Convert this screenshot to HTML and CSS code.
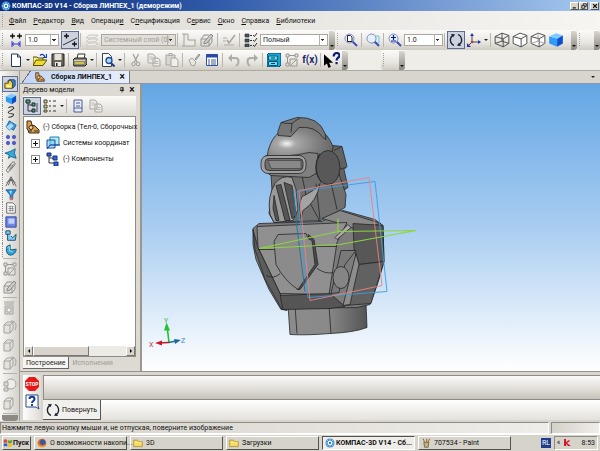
FILE: index.html
```html
<!DOCTYPE html>
<html lang="ru">
<head>
    <meta charset="UTF-8">
    <meta name="viewport" content="width=device-width, initial-scale=1.0">
    <title>КОМПАС-3D V14 - Сборка ЛИНПЕХ_1 (деморежим)</title>
    <link rel="stylesheet" href="styles.css">
</head>
<body>

    <!-- shared icons -->
    <svg class="sprite" aria-hidden="true">
        <symbol id="logo" viewBox="0 0 14 14"><circle cx="7" cy="7" r="6.3" fill="#3f8fd0"/><path d="M7 1v12M1 7h12M3 3l8 8M11 3l-8 8" stroke="#c8e8fa" fill="none"/><circle cx="7" cy="7" r="3" fill="#fff"/><circle cx="7" cy="7" r="1.6" fill="#2a78b8"/></symbol>
        <symbol id="step" viewBox="0 0 14 14"><path d="M1 3h5M3.500 .5v5M8 3h5M10.500 .5v5" stroke="#111" stroke-width="1.300"/><path d="M3 8v6M11 8v6M3 11h8M5 9.500L3 11l2 1.500M9 9.500l2 1.500-2 1.500" stroke="#3038d0" fill="none"/></symbol>
        <symbol id="snap" viewBox="0 0 14 14"><path d="M0 12L14 5" stroke="#333"/><path d="M1 3h5M3.500 .5v5M9 11h5M11.500 8.500v5" stroke="#111" stroke-width="1.300"/></symbol>
        <symbol id="layers" viewBox="0 0 14 14"><path d="M4 2h9l-3 3H1zM4 6h9l-3 3H1zM4 10h9l-3 3H1z" fill="#eeece8" stroke="#cbc8c2"/></symbol>
        <symbol id="sketch" viewBox="0 0 14 14"><path d="M2 1h4v6h7v6H2zM2 1H0M2 13H0M13 7h1" fill="#eceae6" stroke="#a5a29c"/></symbol>
        <symbol id="editpart" viewBox="0 0 14 14"><path d="M1 6h8v7H1zM1 6l3-4h5M9 13l3-4V5" fill="#e2e0dc" stroke="#97948e"/><path d="M4 9l7-8 2 2-6 7-3 1z" fill="#ccc" stroke="#888"/></symbol>
        <symbol id="check" viewBox="0 0 14 14"><path d="M1 5h4M1 8h3M2 12h10" stroke="#b0ada8"/><path d="M5 7l2 3 6-8" stroke="#a5a29c" stroke-width="1.500" fill="none"/></symbol>
        <symbol id="checklist" viewBox="0 0 14 14"><path d="M1 1h4v3H1zM1 6h4v3H1zM1 11h4v3H1z" fill="#456" stroke="#222" stroke-width=".6"/><path d="M6 2.500h2M6 7.500h2M6 12.500h2M9 2l1.500 1.500L13 0M9 7l1.500 1.500L13 5M9 12l1.500 1.500L13 10" stroke="#333" fill="none"/></symbol>
        <symbol id="lens" viewBox="0 0 14 14"><path d="M8.500 8.500l4.500 4.500" stroke="#3a50b4" stroke-width="2"/><circle cx="5.500" cy="5.500" r="4.500" fill="#e6f1fb" stroke="#7d90c8"/></symbol>
        <symbol id="zoompage" viewBox="0 0 14 14"><use href="#lens"/><path d="M3.500 2.500h3l1.500 1.500v4.500H3.500z" fill="#fff" stroke="#223"/></symbol>
        <symbol id="zoomwin" viewBox="0 0 14 14"><path d="M5 3h8v7H5z" fill="#d4f0f4" stroke="#8ac4cc"/><use href="#lens"/></symbol>
        <symbol id="zoompm" viewBox="0 0 14 14"><use href="#lens"/><path d="M3 4.500h5M5.500 2v5M3 8h5" stroke="#0c1c80" stroke-width="1.200"/></symbol>
        <symbol id="rotate" viewBox="0 0 14 14"><path d="M5 12.500A6 6 0 0 1 3.500 2.400M9 1.500a6 6 0 0 1 1.500 10.100" fill="none" stroke="#1c2430" stroke-width="1.300"/><path d="M2 1l4 .2-2 3.300zM12 13l-4-.2 2-3.300z" fill="#1c2430"/></symbol>
        <symbol id="axes" viewBox="0 0 14 14"><path d="M5 1v8h8M5 9l-4 4" fill="none" stroke="#444"/><path d="M3 3l2-3 2 3zM11 7l3 2-3 2zM0 10v4h4z" fill="#2838a8"/><circle cx="5" cy="9" r="1.300" fill="#c33"/></symbol>
        <symbol id="cubewire" viewBox="0 0 14 14"><path d="M1 4l6-3 6 2v7l-5 3-7-3zM1 4l7 2 5-3M8 6v7M7 1v7l-6 2M7 8l6 2" fill="none" stroke="#444" stroke-width=".8"/></symbol>
        <symbol id="cube" viewBox="0 0 14 14"><path d="M1 4l6-3 6 2v7l-5 3-7-3zM1 4l7 2 5-3M8 6v7" fill="#fff" stroke="#444" stroke-width=".8"/></symbol>
        <symbol id="cubehid" viewBox="0 0 14 14"><use href="#cube"/><path d="M7 1v7l-6 2M7 8l6 2" fill="none" stroke="#999" stroke-width=".8"/></symbol>
        <symbol id="cubeblue" viewBox="0 0 14 14"><path d="M1 4l6-3 6 2-5 3z" fill="#7cccfc"/><path d="M1 4l7 2v7l-7-3z" fill="#2f9bf4"/><path d="M8 6l5-3v7l-5 3z" fill="#0c4fd0"/></symbol>
        <symbol id="new" viewBox="0 0 14 14"><path d="M2.500 1h6l3 3v9.500h-9z" fill="#fff" stroke="#223a5c"/><path d="M8.500 1v3h3" fill="none" stroke="#223a5c"/></symbol>
        <symbol id="open" viewBox="0 0 14 14"><path d="M0 12V4h4l1 1h5v2" fill="#ffef7c" stroke="#55500c"/><path d="M0 12.500l3-5.500h11l-4 5.500z" fill="#eddb28" stroke="#55500c"/><path d="M7 2.500c2-2 4-1 5 1.500M13.500 1v3.500H10" fill="none" stroke="#1c3cc0" stroke-width="1.200"/></symbol>
        <symbol id="save" viewBox="0 0 14 14"><path d="M1 1h12v12H1z" fill="#6b6658" stroke="#222"/><path d="M3.500 1h7v6h-7z" fill="#e6e3d8"/><path d="M4 9h6v4H4z" fill="#e9e9e9"/><path d="M5 10h1.500v3H5z" fill="#222"/></symbol>
        <symbol id="print" viewBox="0 0 14 14"><path d="M4 6l1-5h7l-1 5" fill="#fff" stroke="#333"/><path d="M0 7l2-2h11l1 2v4l-2 2H1l-1-2z" fill="#8a8674" stroke="#222"/><path d="M2 10h9" stroke="#e9e03a" stroke-width="1.400"/><path d="M1 7.500h11" stroke="#d5d2c4"/></symbol>
        <symbol id="preview" viewBox="0 0 14 14"><path d="M1.500 .5h6l3 3v10h-9z" fill="#fff" stroke="#345"/><circle cx="8" cy="7.500" r="3" fill="#a9d6f2" stroke="#1c4d96" stroke-width="1.300"/><path d="M10 10l3.500 3.500" stroke="#1c3d86" stroke-width="2"/></symbol>
        <symbol id="cut" viewBox="0 0 14 14"><path d="M4 1l4 8M9.500 1L5.500 9" stroke="#a09d98" stroke-width="1.200"/><circle cx="4.500" cy="11" r="1.800" fill="none" stroke="#a09d98"/><circle cx="9" cy="11" r="1.800" fill="none" stroke="#a09d98"/></symbol>
        <symbol id="copy" viewBox="0 0 14 14"><path d="M1 1h5l2 2v7H1zM6 5h5l2 2v6H6z" fill="#edebe8" stroke="#aaa7a1"/><path d="M2.500 4h3M2.500 6h3M7.500 8.500h4M7.500 10.500h4" stroke="#bbb"/></symbol>
        <symbol id="paste" viewBox="0 0 14 14"><path d="M1 2h9v10H1z" fill="#d9d7d2" stroke="#aaa7a1"/><path d="M4 .5h3v2H4zM6 5h5l2 2v6.500H6z" fill="#f1efec" stroke="#aaa7a1"/></symbol>
        <symbol id="brush" viewBox="0 0 14 14"><path d="M8 6l4-5 1 1-4 5z" fill="#bbb" stroke="#999"/><path d="M2 7l3-2 4 4-2 4-3-1z" fill="#e9e7e3" stroke="#a5a29c"/></symbol>
        <symbol id="table" viewBox="0 0 14 14"><path d="M1.500 1.500h11v11h-11z" fill="#fff" stroke="#2d50a4"/><path d="M1.500 3h11" stroke="#2648a8" stroke-width="3"/><path d="M3 7h2M3 9h2M3 11h2M6 7h5M6 9h5M6 11h5" stroke="#445a90"/></symbol>
        <symbol id="undo" viewBox="0 0 14 14"><path d="M2 5h6c5 0 4 6 1 8" fill="none" stroke="#b0ada8" stroke-width="2"/><path d="M5 1L1 5l4 4z" fill="#b0ada8"/></symbol>
        <symbol id="redo" viewBox="0 0 14 14"><path d="M12 5H6c-5 0-4 6-1 8" fill="none" stroke="#b0ada8" stroke-width="2"/><path d="M9 1l4 4-4 4z" fill="#b0ada8"/></symbol>
        <symbol id="cabinet" viewBox="0 0 14 14"><path d="M0 2l2-2h12v12l-2 2H0z" fill="#18a8d8" stroke="#063a68"/><path d="M1.500 3h9v4h-9zM1.500 8.500h9v4h-9z" fill="#5fe0f8" stroke="#085878"/><path d="M4 5h4M4 10.500h4" stroke="#063a58"/></symbol>
        <symbol id="graypart" viewBox="0 0 14 14"><path d="M1 1h3v3H1zM10 1h3v3h-3zM4 2.500h6M2.500 4v6M1 10h3v3H1zM5 6h7v7H5z" fill="#e5e3df" stroke="#9a9792"/><path d="M6 12l5-5" stroke="#9a9792"/></symbol>
        <symbol id="whatsthis" viewBox="0 0 14 14"><path d="M0 2v10l2.500-2L4 14l2-1-1.500-3.500H8z" fill="#000"/><path d="M8.500 4c0-4 5-4 5-1 0 2-2.500 2-2.500 4.500M11 8.800v2" fill="none" stroke="#101c78" stroke-width="1.900"/></symbol>
        <symbol id="assembly" viewBox="0 0 14 14"><path d="M1 1h4l1 4 3 1 4 4v3H3l-1-3-1-1z" fill="#d9a058" stroke="#3c2810"/><circle cx="5" cy="7.500" r="2" fill="#f2d49c" stroke="#3c2810"/><path d="M8 11h4M3 11h3" stroke="#3c2810"/></symbol>
        <symbol id="part" viewBox="0 0 14 14"><path d="M4 4l2-2h6l1 1v6l-3 3" fill="#2c82d8" stroke="#1c3c6c"/><path d="M1 6h4V3h3l2 3v6H1z" fill="#f6d040" stroke="#4a3c10"/><path d="M3 8h5v3H3z" fill="#fff0a0"/></symbol>
        <symbol id="curve" viewBox="0 0 14 14"><path d="M4 2c3-2 7-1 6 1S3 6 4 8s6 0 6 2-3 3-6 3" fill="none" stroke="#333" stroke-width="1.200"/></symbol>
        <symbol id="plane" viewBox="0 0 14 14"><path d="M5 1l8 5-3 6-8-5z" fill="#3a9ce0" stroke="#1c5fa0"/><path d="M1 8l6-5 4 4-6 5z" fill="#a5dcfa" stroke="#2c7fc0" stroke-width=".8"/></symbol>
        <symbol id="array" viewBox="0 0 14 14"><g fill="#4a5ad8" stroke="#2434a0" stroke-width=".6"><circle cx="3.500" cy="3.500" r="2"/><circle cx="10.500" cy="3.500" r="2"/><circle cx="3.500" cy="10.500" r="2"/><circle cx="10.500" cy="10.500" r="2"/></g></symbol>
        <symbol id="surface" viewBox="0 0 14 14"><path d="M0 6l6-2 6-3-1 5 2 6-6-2-3 2 1-4z" fill="#35a8e0" stroke="#14608c"/></symbol>
        <symbol id="clip" viewBox="0 0 14 14"><path d="M3 8l5-6c2-2 5 0 3 3l-6 7c-2 2-4 0-3-2l6-6M5 10l5-6" fill="none" stroke="#666" stroke-width="1.100"/></symbol>
        <symbol id="compass" viewBox="0 0 14 14"><path d="M1 13L7 2l6 11M4 12l3-8 3 8M2 9c3-4 7-4 10 0" fill="none" stroke="#555"/></symbol>
        <symbol id="filter" viewBox="0 0 14 14"><path d="M1 1h12L9 7v5H6V7z" fill="#2a8fd8" stroke="#155a94"/><path d="M5 2h3l-1 5z" fill="#aee2fb"/><path d="M6 10h3v3H6z" fill="#e06a60"/></symbol>
        <symbol id="spec" viewBox="0 0 14 14"><path d="M2 1h7l3 3v9H2z" fill="#fff" stroke="#555"/><path d="M4 5h6M4 7.500h6M4 10h6M6 5v6M9 5v6" stroke="#666" stroke-width=".8"/></symbol>
        <symbol id="report" viewBox="0 0 14 14"><path d="M1 1h12v12H1z" fill="#6f86e4" stroke="#2a3a98"/><path d="M4 3h7v6H4z" fill="#c4d2fa"/></symbol>
        <symbol id="measure" viewBox="0 0 14 14"><path d="M1 1h5v4H1zM3 5v7h9l1-7-4 4-2-2" fill="#7ad0ee" stroke="#1c3c6c"/></symbol>
        <symbol id="sheetmetal" viewBox="0 0 14 14"><path d="M2 3l4-2v6l7-1c0 4-3 7-7 7-4-1-5-4-4-10z" fill="#2fa5dc" stroke="#14506c"/><path d="M3 4l2-1v5l4 1" fill="none" stroke="#baeafa"/></symbol>
        <symbol id="graycube" viewBox="0 0 14 14"><path d="M1 5l3-3h6v7l-3 4H1zM1 5h6l3-3M7 5v8" fill="#e4e2dd" stroke="#a5a29c"/></symbol>
        <symbol id="graypull" viewBox="0 0 14 14"><path d="M1 1h10M1 3h10M2 5h8v8H2z" fill="#dcdad5" stroke="#a5a29c"/><path d="M4 7h4v4H4z" fill="#f4f2ef" stroke="#a5a29c"/></symbol>
        <symbol id="grayturn" viewBox="0 0 14 14"><use href="#graycube"/><path d="M8 1c5 0 6 4 4 9" fill="none" stroke="#a5a29c"/></symbol>
        <symbol id="grayround" viewBox="0 0 14 14"><circle cx="8" cy="6" r="5" fill="#efedea" stroke="#a5a29c"/><path d="M1 4h4v4H1zM1 10h4v3H1z" fill="#dcdad5" stroke="#a5a29c"/></symbol>
        <symbol id="tree" viewBox="0 0 14 14"><path d="M3 3v9h5M3 6h5" fill="none" stroke="#333"/><path d="M1 1h4v3H1zM7 4h3v3H7zM7 10h3v3H7z" fill="#4aa868" stroke="#223"/><path d="M12 4v9" stroke="#445"/></symbol>
        <symbol id="treelist" viewBox="0 0 14 14"><path d="M1 1h3v3H1zM1 6h3v3H1zM1 11h3v2H1z" fill="#e0d098" stroke="#443"/><path d="M6 2h2M10 2h3M6 7h2M10 7h3M6 12h2M10 12h3" stroke="#334"/></symbol>
        <symbol id="props" viewBox="0 0 14 14"><path d="M3 1h8v12H3z" fill="#e9edfa" stroke="#4c5a98"/><path d="M5 4h4M5 7h4M3 9h8" stroke="#4c5a98"/></symbol>
        <symbol id="coords" viewBox="0 0 14 14"><path d="M4 1h9v8H4z" fill="#b5eaf4" stroke="#1c80b0"/><path d="M1 4h8v8H1z" fill="#6fcbe8" fill-opacity=".6" stroke="#1850a0"/><path d="M4 9L1 13M4 9h10" stroke="#2030a0"/></symbol>
        <symbol id="components" viewBox="0 0 14 14"><path d="M3 4v7h5M3 6h5" fill="none" stroke="#333"/><path d="M1 1h4v3H1zM7 4h4v4H7zM8 10h4v4H8z" fill="#3565d8" stroke="#14307c"/></symbol>
        <symbol id="pin" viewBox="0 0 14 14"><path d="M4 1h6v7H4zM8 1v7M2 8h10M7 8v5" fill="none" stroke="#111" stroke-width="1.600"/></symbol>
        <symbol id="folder" viewBox="0 0 14 14"><path d="M1 3h5l1 2h6v7H1z" fill="#f8dc62" stroke="#a98418"/><path d="M2 6h10" stroke="#fff6b8"/></symbol>
        <symbol id="firefox" viewBox="0 0 14 14"><circle cx="7" cy="7" r="6" fill="#e2641a"/><circle cx="8" cy="6" r="3.800" fill="#2c5cac"/><path d="M1 4c0 8 7 8 11 5-1 4-9 6-11 0z" fill="#f49a28"/></symbol>
        <symbol id="windows" viewBox="0 0 14 14"><path d="M1 3c2-2 4-1 5 0v4C5 6 3 6 1 7z" fill="#e04828"/><path d="M7 3c2 1 4 1 6-1v4c-2 2-4 2-6 1z" fill="#58a830"/><path d="M1 8c2-1 4-1 5 0v4c-1-1-3-1-5 0z" fill="#2c60d0"/><path d="M7 8c2 1 4 1 6-1v4c-2 2-4 2-6 1z" fill="#f0c020"/></symbol>
        <symbol id="paint" viewBox="0 0 14 14"><path d="M4 6h7l-1 7H5z" fill="#c8b070" stroke="#554"/><path d="M5 6L3 1M8 6V1M10 6l2-5" stroke="#a06030" stroke-width="1.400"/></symbol>
    </svg>

    <header class="titlebar">
        <svg class="ico small"><use href="#logo"/></svg>
        <h1>КОМПАС-3D V14 - Сборка ЛИНПЕХ_1 (деморежим)</h1>
        <div class="window-buttons">
            <button aria-label="Свернуть"><svg viewBox="0 0 8 8"><path d="M1 6.500h4" stroke="#000" stroke-width="1.500"/></svg></button>
            <button aria-label="Восстановить"><svg viewBox="0 0 8 8"><path d="M3 3V1h4v3.500H5M1 3.500h4V7H1z" fill="none" stroke="#000"/></svg></button>
            <button class="close" aria-label="Закрыть"><svg viewBox="0 0 8 8"><path d="M1.500 1.500l5 5M6.500 1.500l-5 5" stroke="#000" stroke-width="1.400"/></svg></button>
        </div>
    </header>

    <nav class="menu">
        <span class="grip"></span>
        <a href="#"><u>Ф</u>айл</a>
        <a href="#"><u>Р</u>едактор</a>
        <a href="#"><u>В</u>ид</a>
        <a href="#">Операци<u>и</u></a>
        <a href="#">С<u>п</u>ецификация</a>
        <a href="#">С<u>е</u>рвис</a>
        <a href="#"><u>О</u>кно</a>
        <a href="#"><u>С</u>правка</a>
        <a href="#"><u>Б</u>иблиотеки</a>
    </nav>

    <div class="toolbar-row">
        <div class="toolbar">
            <span class="grip"></span>
            <button aria-label="Шаг курсора"><svg class="ico"><use href="#step"/></svg></button>
            <select class="combo step" aria-label="Шаг"><option>1.0</option></select>
            <button class="active" aria-label="Привязки"><svg class="ico"><use href="#snap"/></svg></button>
            <i class="sep"></i>
            <button aria-label="Слои" disabled><svg class="ico"><use href="#layers"/></svg></button>
            <select class="combo layer" aria-label="Слой" disabled><option>Системный слой (0)</option></select>
            <i class="sep"></i>
            <button aria-label="Эскиз" disabled><svg class="ico"><use href="#sketch"/></svg></button>
            <button aria-label="Редактировать на месте" disabled><svg class="ico"><use href="#editpart"/></svg></button>
            <i class="sep"></i>
            <button aria-label="Проверка" disabled><svg class="ico"><use href="#check"/></svg></button>
            <i class="sep"></i>
            <button aria-label="Тип загрузки"><svg class="ico"><use href="#checklist"/></svg></button>
            <select class="combo load" aria-label="Загрузка"><option>Полный</option></select>
            <span class="cap"></span>
        </div>
        <div class="toolbar">
            <span class="grip"></span>
            <button aria-label="Показать все"><svg class="ico"><use href="#zoompage"/></svg></button>
            <i class="sep"></i>
            <button aria-label="Увеличить рамкой"><svg class="ico"><use href="#zoomwin"/></svg></button>
            <i class="sep"></i>
            <button aria-label="Масштаб"><svg class="ico"><use href="#zoompm"/></svg></button>
            <select class="combo scale" aria-label="Масштаб вида"><option>1.0</option></select>
            <i class="sep"></i>
            <button class="active" aria-label="Повернуть"><svg class="ico"><use href="#rotate"/></svg></button>
            <button aria-label="Ориентация"><svg class="ico"><use href="#axes"/></svg></button>
            <i class="more"></i>
            <i class="sep"></i>
            <button aria-label="Каркас"><svg class="ico big"><use href="#cubewire"/></svg></button>
            <button aria-label="Без невидимых линий"><svg class="ico big"><use href="#cube"/></svg></button>
            <button aria-label="Невидимые линии тонкие"><svg class="ico big"><use href="#cubehid"/></svg></button>
            <button aria-label="Полутоновое"><svg class="ico big"><use href="#cubeblue"/></svg></button>
            <span class="cap wide"></span>
        </div>
        <div class="toolbar rest">
            <span class="grip"></span>
            <span class="cap push"></span>
        </div>
    </div>

    <div class="toolbar-row">
        <div class="toolbar">
            <span class="grip"></span>
            <button aria-label="Создать"><svg class="ico"><use href="#new"/></svg></button>
            <i class="more"></i>
            <button aria-label="Открыть"><svg class="ico"><use href="#open"/></svg></button>
            <button aria-label="Сохранить"><svg class="ico"><use href="#save"/></svg></button>
            <i class="sep"></i>
            <button aria-label="Печать"><svg class="ico"><use href="#print"/></svg></button>
            <i class="more"></i>
            <i class="sep"></i>
            <button aria-label="Просмотр"><svg class="ico"><use href="#preview"/></svg></button>
            <i class="more"></i>
            <i class="sep"></i>
            <button aria-label="Вырезать" disabled><svg class="ico"><use href="#cut"/></svg></button>
            <button aria-label="Копировать" disabled><svg class="ico"><use href="#copy"/></svg></button>
            <button aria-label="Вставить" disabled><svg class="ico"><use href="#paste"/></svg></button>
            <i class="sep"></i>
            <button aria-label="Копировать свойства" disabled><svg class="ico"><use href="#brush"/></svg></button>
            <button aria-label="Свойства"><svg class="ico"><use href="#table"/></svg></button>
            <i class="sep"></i>
            <button aria-label="Отменить" disabled><svg class="ico"><use href="#undo"/></svg></button>
            <button aria-label="Повторить" disabled><svg class="ico"><use href="#redo"/></svg></button>
            <i class="sep"></i>
            <button aria-label="Менеджер библиотек"><svg class="ico"><use href="#cabinet"/></svg></button>
            <button aria-label="Менеджер документа" disabled><svg class="ico"><use href="#graypart"/></svg></button>
            <button class="fx" aria-label="Переменные">f(x)</button>
            <i class="sep"></i>
            <button aria-label="Что это?"><svg class="ico big"><use href="#whatsthis"/></svg></button>
            <span class="cap"></span>
        </div>
        <div class="toolbar mini">
            <span class="grip"></span>
            <span class="cap push"></span>
        </div>
    </div>

    <main class="workspace">
        <aside class="sidebar">
            <button class="active" aria-label="Редактирование сборки"><svg class="ico"><use href="#part"/></svg></button>
            <button aria-label="Редактирование детали"><svg class="ico"><use href="#cubeblue"/></svg></button>
            <button aria-label="Кривые"><svg class="ico"><use href="#curve"/></svg></button>
            <button aria-label="Плоскости"><svg class="ico"><use href="#plane"/></svg></button>
            <button aria-label="Массивы"><svg class="ico"><use href="#array"/></svg></button>
            <button aria-label="Поверхности"><svg class="ico"><use href="#surface"/></svg></button>
            <button aria-label="Сопряжения"><svg class="ico"><use href="#clip"/></svg></button>
            <button aria-label="Измерения"><svg class="ico"><use href="#compass"/></svg></button>
            <button aria-label="Фильтры"><svg class="ico"><use href="#filter"/></svg></button>
            <button aria-label="Спецификация"><svg class="ico"><use href="#spec"/></svg></button>
            <button aria-label="Отчеты"><svg class="ico"><use href="#report"/></svg></button>
            <button aria-label="Обозначения"><svg class="ico"><use href="#measure"/></svg></button>
            <button aria-label="Листовое тело"><svg class="ico"><use href="#sheetmetal"/></svg></button>
            <hr>
            <button class="tall" aria-label="Добавить из файла" disabled><svg class="ico"><use href="#graypart"/></svg></button>
            <button class="tall" aria-label="Создать деталь" disabled><svg class="ico"><use href="#editpart"/></svg></button>
            <hr>
            <button class="tall" aria-label="Выдавливание" disabled><svg class="ico"><use href="#graypull"/></svg></button>
            <button class="tall" aria-label="Вращение" disabled><svg class="ico"><use href="#grayturn"/></svg></button>
            <button class="tall" aria-label="Сечение" disabled><svg class="ico"><use href="#graycube"/></svg></button>
            <button class="tall" aria-label="Повернуть компонент" disabled><svg class="ico"><use href="#grayturn"/></svg></button>
            <hr>
            <button class="tall" aria-label="Отверстие" disabled><svg class="ico"><use href="#grayround"/></svg></button>
            <button class="tall" aria-label="Массив" disabled><svg class="ico"><use href="#graycube"/></svg></button>
            <hr>
            <span class="sidebar-cap"></span>
        </aside>

        <div class="content">
            <div class="doc-tabs">
                <div class="doc-tab">
                    <svg class="ico small"><use href="#assembly"/></svg>
                    <b>Сборка ЛИНПЕХ_1</b>
                    <button aria-label="Закрыть вкладку">×</button>
                </div>
                <i class="more"></i>
            </div>

            <div class="document">
                <section class="tree-panel">
                    <header>
                        <h2>Дерево модели</h2>
                        <button aria-label="Закрепить"><svg class="ico tiny"><use href="#pin"/></svg></button>
                        <button aria-label="Закрыть">×</button>
                    </header>
                    <div class="tree-tools">
                        <button class="active" aria-label="Структура"><svg class="ico"><use href="#tree"/></svg></button>
                        <button aria-label="Состав"><svg class="ico"><use href="#treelist"/></svg></button>
                        <i class="more"></i>
                        <i class="sep"></i>
                        <button aria-label="Отношения"><svg class="ico"><use href="#props"/></svg></button>
                        <button aria-label="Дополнительное окно" disabled><svg class="ico"><use href="#copy"/></svg></button>
                    </div>
                    <div class="tree-box">
                        <ul class="tree">
                            <li><svg class="ico"><use href="#assembly"/></svg>(-) Сборка (Тел-0, Сборочных</li>
                            <li class="child"><span class="plus"></span><svg class="ico"><use href="#coords"/></svg>Системы координат</li>
                            <li class="child"><span class="plus"></span><svg class="ico"><use href="#components"/></svg>(-) Компоненты</li>
                        </ul>
                        <div class="scrollbar">
                            <button class="left" aria-label="Влево"></button>
                            <span class="thumb"></span>
                            <button class="right" aria-label="Вправо"></button>
                        </div>
                    </div>
                    <div class="tree-tabs">
                        <button class="current">Построение</button>
                        <button disabled>Исполнения</button>
                    </div>
                </section>

                <div class="viewport">
                    <svg viewBox="142 86 458 284" preserveAspectRatio="xMidYMid meet">
                        <defs>
                            <radialGradient id="dome" cx=".3" cy=".55" r=".7">
                                <stop offset="0" stop-color="#f4f4f4"/>
                                <stop offset=".2" stop-color="#a8a8a8"/>
                                <stop offset=".6" stop-color="#858585"/>
                                <stop offset="1" stop-color="#686868"/>
                            </radialGradient>
                            <linearGradient id="cyl">
                                <stop offset="0" stop-color="#8b8b8b"/>
                                <stop offset=".5" stop-color="#8a8a8a"/>
                                <stop offset="1" stop-color="#545454"/>
                            </linearGradient>
                        </defs>
                        <g stroke="#262626" stroke-width=".8" stroke-linejoin="round">
                            <!-- neck stand -->
                            <path d="M288 306l2 29q16 1 40-1 24-1 37-6l-1-24z" fill="url(#cyl)"/>
                            <path d="M295 306l2 28M329 306l2 28" fill="none"/>
                            <!-- helmet back -->
                            <path d="M333 146l9 1 5 20-3 3 4 18-5 3 2 16-22 12-10-50z" fill="#626262"/>
                            <path d="M342 147l-8 4M346 168l-8 2" fill="none"/>
                            <!-- jaw and cheeks -->
                            <path d="M271 175l20-5 42-13 13 38-1 13-24 13-47 2-5-9 3-23z" fill="#707070"/>
                            <path d="M302 176l4 20 14 26M331 183l6 27M316 184l4 36" fill="none"/>
                            <path d="M320 184q-3 18-17 27l-2 8q-3-14 1-22 12-5 18-13z" fill="#a4a4a4"/>
                            <!-- dome -->
                            <path d="M267 158q3-27 28-33 28-3 38 22l-1 8-16 2-48 3z" fill="url(#dome)"/>
                            <path d="M278 132l3-9 16-5q22-1 28 16l1 6-3-2q-8-12-24-10l-8 9-13-1z" fill="#767676"/>
                            <path d="M281 123q3 1 11 1l-1 9M292 124q6-5 8-5" fill="none"/>
                            <!-- visor -->
                            <path d="M266 156q22 2 43-3l9 1-2 20-7 4-38-2q-8-5-9-11 1-7 4-9z" fill="#808080"/>
                            <rect x="261" y="156" width="45" height="18" rx="7" fill="#a0a0a0"/>
                            <rect x="265" y="159" width="38" height="12" rx="4" fill="#6f6f6f"/>
                            <path d="M268 161h33v8h-30z" fill="#898989" stroke-width=".5"/>
                            <ellipse cx="328" cy="168" rx="12" ry="17" fill="#585858"/>
                            <path d="M320 154q-9 14 1 29" fill="none"/>
                            <!-- breathing mask -->
                            <path d="M275 184q7-9 17-6l4 12 2 20-5 11-19 2-4-8q-3-18 5-31z" fill="#9a9a9a"/>
                            <path d="M276 186l5-1 9 36h-5zM274 196l5 25h-3l-3-12zM284 183l8 3 4 30-4 3z" fill="#555"/>
                            <!-- torso silhouette -->
                            <path d="M253 229l6-5 63-2 21-11 32 9 8 6 1 36-6 21-8 22-13 3-69 1-7 1-12-20-13-30-3-15z" fill="#7c7c7c"/>
                            <path d="M322 219l18-8 41 13-27 5-14-5z" fill="#888"/>
                            <path d="M353 224l30 2 1 36-25 3-5-15z" fill="#575757"/>
                            <path d="M359 265l25-3-13 42-26 2z" fill="#616161"/>
                            <!-- breastplate -->
                            <path d="M257 227l90-4-10 20-8 52-49-1-22-46z" fill="#909090"/>
                            <path d="M253 230l5 18 13 27 10 21 6 15-5-1-17-30-10-30z" fill="#5c5c5c"/>
                            <path d="M280 296l50-2 15 13-15 2-47 1z" fill="#555"/>
                            <path d="M341 251h15l-11 14-6 28-8 1z" fill="#797979"/>
                            <ellipse cx="341" cy="278" rx="8" ry="11" fill="#858585"/>
                            <path d="M356 254l3 11-9 40-7 1z" fill="#8d8d8d"/>
                            <path d="M258 250h18M313 247h24M317 269q9 6 16 4M266 276q8 4 14-2" fill="none"/>
                            <!-- chest shield -->
                            <path d="M308 235l6 5 4 25-18 25-3 0 18-27z" fill="#4c4c4c"/>
                            <path d="M274 242l4-7 28-1 2 5 4 2 3 24-17 25q-14-9-22-25z" fill="#8b8b8b"/>
                            <path d="M337 240l14-12-3-3-13 13z" fill="#aaa"/>
                        </g>
                        <!-- construction planes -->
                        <path d="M297 192l78-10 12 110-79 6z" fill="none" stroke="#3e9cdc" stroke-width=".9"/>
                        <path d="M299 191l70-13 13 108-72 15z" fill="none" stroke="#e8837c" stroke-width=".9"/>
                        <path d="M293 190l4 38 8 64" fill="none" stroke="#27759e"/>
                        <path d="M259 249l79-17 78-1-76 14zM338 219v15" fill="none" stroke="#8dd63c" stroke-width="1.200"/>
                        <!-- coordinate triad -->
                        <g stroke-width="1.600">
                            <path d="M169 343l-2-17" stroke="#22c32c"/>
                            <path d="M164 331l2.500-8 3.500 8z" fill="#22c32c"/>
                            <path d="M169 343l-11 .5" stroke="#c81828"/>
                            <path d="M155 343.500l7-2.500v5z" fill="#c81828"/>
                            <path d="M169 343l9-2" stroke="#1d6ba0"/>
                            <path d="M181 340.500l-7-1 1 5z" fill="#1d6ba0"/>
                        </g>
                        <text class="axis" x="149" y="347" fill="#c8303c">X</text>
                        <text class="axis" x="164" y="323" fill="#40bc40">Y</text>
                        <text class="axis" x="181" y="343" fill="#3a88b8">Z</text>
                    </svg>
                </div>
            </div>

            <section class="property-bar">
                <div class="property-buttons">
                    <button aria-label="Прервать команду"><svg viewBox="0 0 16 16"><path d="M5 1h6l4 4v6l-4 4H5l-4-4V5z" fill="#e81818"/><text class="stop" x="8" y="10">STOP</text></svg></button>
                    <button aria-label="Справка"><svg viewBox="0 0 16 16"><path d="M2 1h12v11l1 3-3-2H2z" fill="#fff" stroke="#274a80"/><path d="M5.500 5c0-3 5-3 5 0 0 2-2.500 2-2.500 4M8 10v2" fill="none" stroke="#14389c" stroke-width="2"/></svg></button>
                </div>
                <div class="property-body">
                    <div class="property-fields"></div>
                    <div class="property-tabs">
                        <button><svg class="ico"><use href="#rotate"/></svg>Повернуть</button>
                    </div>
                </div>
            </section>
        </div>
    </main>

    <footer class="status">
        <p>Нажмите левую кнопку мыши и, не отпуская, поверните изображение</p>
        <span></span>
    </footer>

    <nav class="taskbar">
        <button class="start"><svg class="ico small"><use href="#windows"/></svg>Пуск</button>
        <button class="task"><svg class="ico small"><use href="#firefox"/></svg>О возможности накопи...</button>
        <button class="task"><svg class="ico small"><use href="#folder"/></svg>3D</button>
        <button class="task"><svg class="ico small"><use href="#folder"/></svg>Загрузки</button>
        <button class="task current"><svg class="ico small"><use href="#logo"/></svg>КОМПАС-3D V14 - Сб...</button>
        <button class="task"><svg class="ico small"><use href="#paint"/></svg>707534 - Paint</button>
        <span class="lang">RL</span>
        <div class="tray">
            <span>«</span>
            <svg viewBox="0 0 8 8"><path d="M1 0h2v3l3-2 1 1-3 2 4 3H5L3 5v2H1z" fill="#d81828"/></svg>
            <time>8:53</time>
        </div>
    </nav>

</body>
</html>
```
FILE: styles.css
```css
* {
    margin: 0;
    padding: 0;
    box-sizing: border-box;
}
body {
    font-family: Roboto, "Liberation Sans", sans-serif;
    font-size: 7px;
    line-height: 10px;
    color: #111;
    background-color: #eceae5;
    min-height: 100vh;
    display: flex;
    flex-direction: column;
}
button {
    font: inherit;
    color: inherit;
    background: none;
    border: none;
    display: flex;
    align-items: center;
    justify-content: center;
}
a {
    color: inherit;
    text-decoration: none;
}
.sprite {
    position: absolute;
    width: 0;
    height: 0;
}
.ico {
    width: 14px;
    height: 14px;
    flex: none;
}
.ico.big {
    width: 16px;
    height: 16px;
}
.ico.small {
    width: 10px;
    height: 10px;
}
.ico.tiny {
    width: 6px;
    height: 6px;
}

/* title */
.titlebar {
    display: flex;
    align-items: center;
    gap: 1px;
    height: 11px;
    padding: 0 1px;
    background: linear-gradient(90deg, #0c2c78, #2f59a8 35%, #a6caf0);
    color: #fff;
}
.titlebar h1 {
    flex: 1;
    font-size: 7px;
    font-weight: bold;
}
.window-buttons {
    display: flex;
}
.window-buttons button {
    width: 9px;
    height: 8px;
    background-color: #d8d4cc;
    border: 1px solid;
    border-color: #fff #555 #555 #fff;
}
.window-buttons svg {
    width: 6px;
    height: 6px;
}
.window-buttons .close {
    margin-left: 2px;
}

/* menu */
.menu {
    display: flex;
    align-items: center;
    gap: 7px;
    height: 19px;
    padding: 0 2px;
    background: linear-gradient(90deg, #dddad3, #f6f5f2);
}
.menu .grip {
    margin-right: -3px;
}
.grip {
    width: 3px;
    height: 14px;
    margin: 0 2px 0 0;
    flex: none;
    background: repeating-linear-gradient(#a19e97 0 1px, transparent 1px 2px) no-repeat 0 0 / 1px 100%;
}

/* toolbars */
.toolbar-row {
    display: flex;
    height: 20px;
    background-color: #efede8;
}
.toolbar {
    display: flex;
    align-items: center;
    padding-left: 2px;
    background: linear-gradient(#fcfbfa, #e9e7e1 60%, #cfccc4);
    border-radius: 3px;
}
.toolbar button,
.tree-tools button {
    width: 18px;
    height: 18px;
    flex: none;
}
.toolbar .active,
.tree-tools .active {
    background-color: #ccd2e0;
    border: 1px solid #5c6f92;
}
.toolbar.rest {
    flex: 1;
}
.toolbar.mini {
    width: 24px;
    margin-left: 33px;
}
.sep {
    width: 1px;
    height: 14px;
    margin: 0 2px 0 1px;
    flex: none;
    background-color: #b9b6af;
}
.more {
    width: 6px;
    flex: none;
    display: flex;
    justify-content: center;
}
.more::after {
    content: "";
    border: 2px solid transparent;
    border-top-color: #222;
    border-bottom: none;
}
.cap {
    width: 6px;
    height: 19px;
    margin-left: 1px;
    flex: none;
    display: flex;
    align-items: flex-end;
    justify-content: center;
    padding-bottom: 3px;
    border-radius: 0 3px 3px 0;
    background: linear-gradient(#d9d6d0, #8b8881);
}
.cap::after {
    content: "";
    border: 2px solid transparent;
    border-top-color: #111;
    border-bottom: none;
}
.cap.wide {
    margin-left: 6px;
}
.cap.push {
    margin-left: auto;
}
.combo {
    appearance: none;
    height: 12px;
    padding: 0 2px;
    border: 1px solid #aaa79f;
    border-radius: 0;
    color: #222;
    font: inherit;
    background: linear-gradient(45deg, transparent 50%, #333 50%) no-repeat right 4px center / 2px 2px,
        linear-gradient(-45deg, transparent 50%, #333 50%) no-repeat right 2px center / 2px 2px,
        linear-gradient(#b5b2ab, #b5b2ab) no-repeat right 7px center / 1px 100%,
        #fff;
}
.combo.step {
    width: 34px;
    margin-right: 2px;
}
.combo.layer {
    width: 75px;
}
.combo.load {
    width: 68px;
}
.combo.scale {
    width: 39px;
}
.combo:disabled {
    opacity: 1;
    color: #a19e98;
    background-color: #e1dfda;
}
.toolbar .fx {
    font-size: 10px;
    font-weight: bold;
    color: #1c2870;
}

/* workspace */
.workspace {
    flex: 1;
    display: flex;
    min-height: 0;
    border-top: 1px solid #aeaba4;
}
.sidebar {
    width: 19px;
    flex: none;
    display: flex;
    flex-direction: column;
    padding: 5px 1px 0 2px;
    background: linear-gradient(90deg, #f8f7f5, #d5d2cb);
}
.sidebar button {
    flex: 3 1 0;
    min-height: 0;
    border-left: 1px dotted #8f8c86;
}
.sidebar .tall {
    flex-grow: 4;
    border-left: none;
}
.sidebar .active {
    background-color: #ccd2e0;
    border: 1px solid #5c6f92;
}
.sidebar .ico {
    width: 12px;
    height: 12px;
}
.sidebar .tall .ico {
    width: 14px;
    height: 14px;
}
.sidebar hr {
    border: none;
    border-top: 1px solid #b5b2ab;
    margin: 1px;
}
.sidebar-cap {
    height: 6px;
    background-color: #8d8a83;
    border-radius: 0 0 3px 3px;
}
.content {
    flex: 1;
    min-width: 0;
    display: flex;
    flex-direction: column;
    border-left: 1px solid #a19e97;
}
.doc-tabs {
    display: flex;
    align-items: center;
    justify-content: space-between;
    height: 13px;
    padding-right: 4px;
    background-color: #d8d5ce;
    border-bottom: 1px solid #8b96a8;
}
.doc-tab {
    display: flex;
    align-items: center;
    gap: 6px;
    height: 12px;
    padding: 0 3px 0 15px;
    border-right: 1px solid #777;
    background: linear-gradient(125deg, #d8d5ce 8px, #66758e 8px 9px, #c4d6f4 9px, #e9f0fc);
}
.doc-tab button,
.tree-panel header button {
    font-size: 10px;
    font-weight: bold;
    width: 8px;
}
.document {
    flex: 1;
    display: flex;
    min-height: 0;
}
.tree-panel {
    width: 122px;
    flex: none;
    display: flex;
    flex-direction: column;
    padding: 0 4px 0 3px;
    border-right: 2px solid #9a978f;
    background-color: #dddad3;
}
.tree-panel header {
    display: flex;
    align-items: center;
    gap: 2px;
    height: 12px;
}
.tree-panel h2 {
    flex: 1;
    font-size: 7px;
    font-weight: normal;
}
.tree-tools {
    display: flex;
    align-items: center;
    height: 20px;
    background: linear-gradient(#fbfaf8, #dedbd5);
}
.tree-box {
    flex: 1;
    display: flex;
    flex-direction: column;
    background-color: #fff;
    border: 1px solid #8f8c86;
}
.tree {
    flex: 1;
    list-style: none;
    padding-top: 2px;
}
.tree li {
    display: flex;
    align-items: center;
    gap: 3px;
    height: 16px;
    padding-left: 2px;
    white-space: nowrap;
}
.tree .child {
    padding-left: 7px;
}
.plus {
    width: 9px;
    height: 9px;
    margin-right: 3px;
    flex: none;
    border: 1px solid #8c8c8c;
    background: linear-gradient(#111, #111) no-repeat center / 5px 1px,
        linear-gradient(#111, #111) no-repeat center / 1px 5px;
}
.scrollbar {
    display: flex;
    height: 10px;
    background-color: #edebe6;
}
.scrollbar button {
    width: 9px;
    background-color: #d8d4cc;
    border: 1px solid;
    border-color: #fff #777 #777 #fff;
}
.scrollbar button::after {
    content: "";
    border: 2px solid transparent;
}
.scrollbar .left::after {
    border-right-color: #000;
    border-left: none;
}
.scrollbar .right {
    margin-left: auto;
}
.scrollbar .right::after {
    border-left-color: #000;
    border-right: none;
}
.thumb {
    width: 50%;
    background-color: #d8d4cc;
    border: 1px solid;
    border-color: #fff #777 #777 #fff;
}
.tree-tabs {
    display: flex;
    height: 14px;
    padding-bottom: 2px;
}
.tree-tabs button {
    padding: 0 3px;
    color: #a09d97;
}
.tree-tabs .current {
    color: #222;
    background-color: #f6f5f2;
    border-right: 1px solid #666;
    border-bottom: 1px solid #666;
}
.viewport {
    flex: 1;
    min-width: 0;
    background: linear-gradient(#63a6e4, #a9cdf1 50%, #fff);
}
.viewport svg {
    display: block;
    width: 100%;
    height: 100%;
}
.axis {
    font-size: 7px;
}

/* property bar */
.property-bar {
    display: flex;
    height: 50px;
    padding: 3px 0 1px 3px;
    border-top: 1px solid #96938c;
    background-color: #d8d5ce;
}
.property-buttons {
    width: 18px;
    background: linear-gradient(90deg, #fdfdfc, #dfdcd6);
}
.property-buttons button {
    width: 18px;
    height: 18px;
}
.property-buttons svg {
    width: 16px;
    height: 16px;
}
.stop {
    font-size: 5px;
    font-weight: bold;
    fill: #fff;
    text-anchor: middle;
}
.property-body {
    flex: 1;
    margin-left: 2px;
    display: flex;
    flex-direction: column;
}
.property-fields {
    height: 25px;
    border: 1px solid #8f8c86;
    border-right: none;
    background: linear-gradient(#fbfaf9, #dfdcd6 60%, #c6c3bb);
}
.property-tabs {
    flex: 1;
    display: flex;
    background: linear-gradient(#fff, #e3e1dc);
}
.property-tabs button {
    gap: 2px;
    padding: 0 3px;
    background-color: #f2f0ed;
    border-right: 1px solid #555;
    border-bottom: 1px solid #555;
}

/* status */
.status {
    display: flex;
    gap: 2px;
    height: 13px;
    padding-top: 1px;
    background-color: #d8d5ce;
}
.status p,
.status span {
    border: 1px solid;
    border-color: #8f8c86 #fff #fff #8f8c86;
    background: linear-gradient(90deg, #d5d2cb, #efede9);
}
.status p {
    flex: 1;
    padding-left: 1px;
}
.status span {
    width: 49px;
}

/* taskbar */
.taskbar {
    display: flex;
    align-items: center;
    gap: 3px;
    height: 17px;
    padding: 1px 2px;
    background-color: #d6d3ca;
    border-top: 1px solid #fff;
}
.taskbar button {
    height: 14px;
    gap: 3px;
    justify-content: flex-start;
    padding: 0 2px;
    white-space: nowrap;
    border: 1px solid;
    border-color: #fff #55534e #55534e #fff;
}
.taskbar .start {
    width: 29px;
    gap: 0;
    padding: 0;
    font-weight: bold;
}
.taskbar .task {
    flex: 0 1 93px;
    min-width: 0;
}
.taskbar .current {
    gap: 1px;
    font-weight: bold;
    background-color: #efede9;
    border-color: #55534e #fff #fff #55534e;
}
.lang {
    margin-left: auto;
    padding: 0 1px;
    color: #fff;
    background-color: #1c3c8c;
}
.tray {
    display: flex;
    align-items: center;
    gap: 3px;
    width: 44px;
    height: 14px;
    padding: 0 2px;
    border: 1px solid;
    border-color: #8f8c86 #fff #fff #8f8c86;
}
.tray svg {
    width: 8px;
    height: 8px;
}
.tray time {
    margin-left: auto;
}
```
